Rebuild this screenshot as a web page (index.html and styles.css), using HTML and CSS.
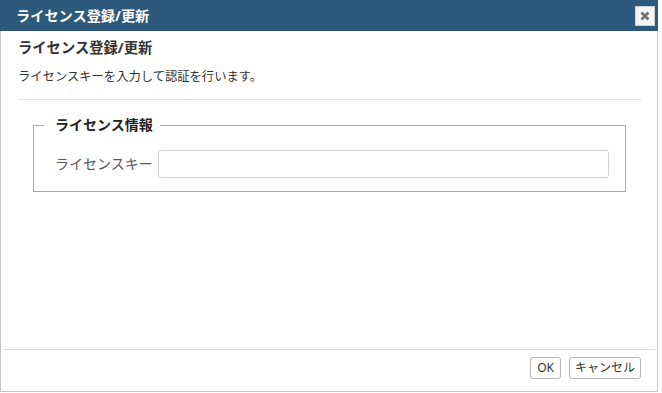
FILE: index.html
```html
<!DOCTYPE html>
<html lang="ja">
<head>
<meta charset="utf-8">
<title>ライセンス登録/更新</title>
<link rel="stylesheet" href="styles.css">
</head>
<body>
<div class="dialog">
  <div class="titlebar">
    <span class="title">ライセンス登録/更新</span>
    <button class="close" type="button" aria-label="close">
      <svg width="10" height="10" viewBox="0 0 10 10"><path d="M1.5 1.5 L8.5 8.5 M8.5 1.5 L1.5 8.5" stroke="#6f6f6f" stroke-width="2.6" stroke-linecap="butt"/></svg>
    </button>
  </div>
  <div class="content">
    <h2 class="heading">ライセンス登録/更新</h2>
    <p class="desc">ライセンスキーを入力して認証を行います。</p>
    <hr class="sep">
    <fieldset class="group">
      <legend class="legend">ライセンス情報</legend>
      <div class="row">
        <label class="label" for="key">ライセンスキー</label>
        <input class="input" id="key" type="text">
      </div>
    </fieldset>
  </div>
  <div class="footer">
    <button class="btn btn-ok" type="button">OK</button>
    <button class="btn btn-cancel" type="button">キャンセル</button>
  </div>
</div>
</body>
</html>
```
FILE: styles.css
```css
* { box-sizing: border-box; }
html, body {
  margin: 0;
  padding: 0;
  background: #ffffff;
}
body {
  font-family: "Noto Sans", "Noto Sans CJK JP", sans-serif;
  color: #333333;
}
.dialog {
  width: 658px;
  height: 392px;
  border: 1px solid #c6c6c6;
  border-top: none;
  display: flex;
  flex-direction: column;
  background: #ffffff;
}
.titlebar {
  height: 31px;
  margin: 0 -1px;
  background: #2d5a7c;
  display: flex;
  align-items: center;
  justify-content: space-between;
  padding: 1px 3px 0 16px;
}
.title {
  color: #ffffff;
  font-size: 14.2px;
  font-weight: bold;
  line-height: 20px;
  margin-top: -1px;
}
.close {
  width: 20px;
  height: 20px;
  padding: 0;
  margin: 0;
  border: 1px solid #d0d0d0;
  background: #f5f5f5;
  display: flex;
  align-items: center;
  justify-content: center;
}
.content {
  flex: 1;
  padding: 7px 16px 0 17px;
}
.heading {
  margin: 0;
  font-size: 14.3px;
  font-weight: bold;
  line-height: 20px;
  color: #333333;
}
.desc {
  margin: 10px 0 0;
  font-size: 12.3px;
  line-height: 18px;
  color: #333333;
}
.sep {
  margin: 13px 0 0;
  border: none;
  border-top: 1px solid #e2e2e2;
  height: 0;
}
.group {
  margin: 15px 15px 0 15px;
  padding: 15px 16px 13px 10px;
  border: 1px solid #aaaaaa;
  min-width: 0;
}
.legend {
  padding: 0 7px 0 11px;
  font-size: 14px;
  font-weight: bold;
  line-height: 20px;
  color: #222222;
}
.row {
  display: flex;
  align-items: center;
  margin-left: 11px;
}
.label {
  font-size: 14px;
  line-height: 20px;
  color: #555555;
  margin-right: 5px;
  white-space: nowrap;
}
.input {
  flex: 1;
  height: 28px;
  border: 1px solid #d2d2d2;
  border-radius: 3px;
  background: #ffffff;
  padding: 0 6px;
  font-size: 13px;
}
.footer {
  margin: 0 2px;
  border-top: 1px solid #dddddd;
  display: flex;
  justify-content: flex-end;
  gap: 8px;
  padding: 7px 14px 12px 0;
}
.btn {
  height: 22px;
  padding: 0 5px;
  border: 1px solid #b5b5b5;
  border-radius: 3px;
  background: #ffffff;
  color: #333333;
  font-family: "Noto Sans", "Noto Sans CJK JP", sans-serif;
  font-size: 12px;
  line-height: 18px;
}
.btn-ok { padding: 0 6px; }
```
